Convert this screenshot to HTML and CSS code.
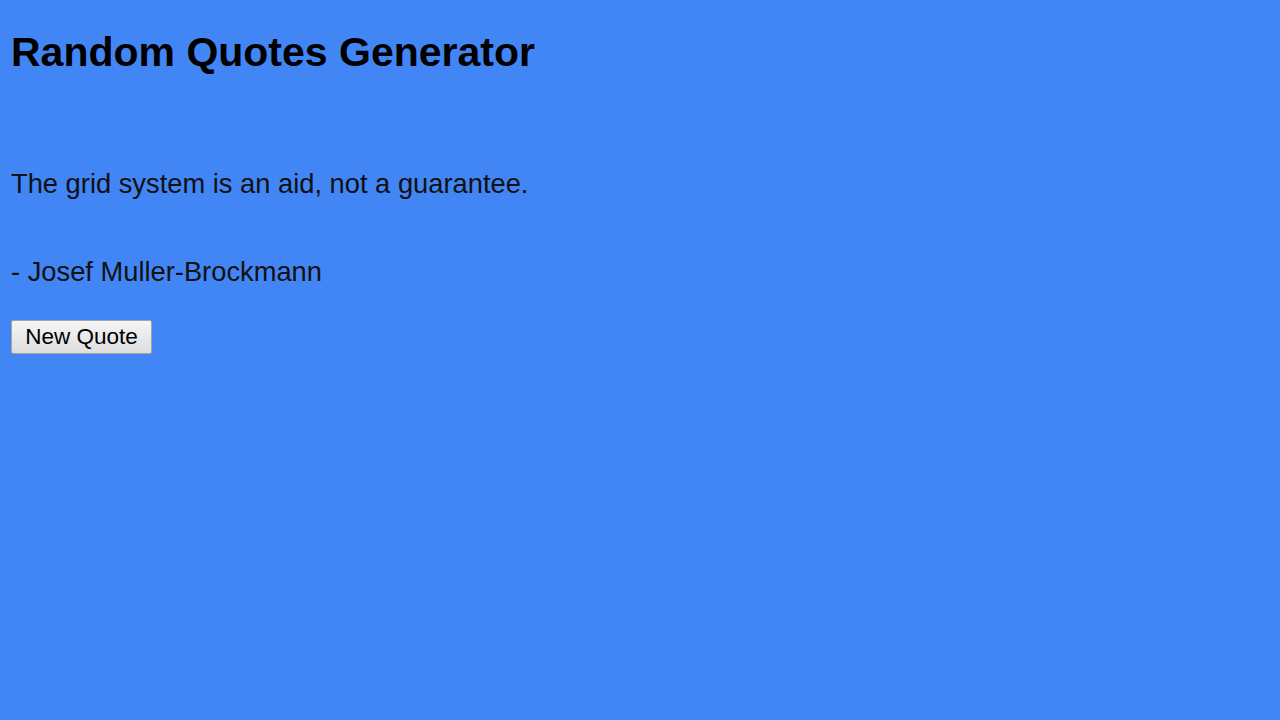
FILE: index.html
```html
<!DOCTYPE html>
<html>
<head>
<meta charset="utf-8">
<title>Random Quotes Generator</title>
<link rel="stylesheet" href="styles.css">
</head>
<body>
<h1 class="title">Random Quotes Generator</h1>
<div class="quote-box">
  <p class="quote">The grid system is an aid, not a guarantee.</p>
  <p class="author">- Josef Muller-Brockmann</p>
  <button class="new-quote">New Quote</button>
</div>
</body>
</html>
```
FILE: styles.css
```css
html, body {
  background: #4285f4;
}
body {
  margin: 10px 11px;
  font-family: "Liberation Sans", Arial, sans-serif;
  color: #000;
}
.title {
  font-size: 41px;
  line-height: 46px;
  font-weight: bold;
  margin: 19px 0 0 0;
}
.quote-box {
  display: flex;
  flex-direction: column;
  align-items: flex-start;
}
.quote {
  font-size: 27.3px;
  line-height: 32px;
  margin: 93px 0 0 0;
  color: #111;
}
.author {
  font-size: 27.3px;
  line-height: 32px;
  margin: 56px 0 0 0;
  color: #111;
}
.new-quote {
  margin-top: 32px;
  height: 34px;
  width: 141px;
  padding: 0;
  font-family: "Liberation Sans", Arial, sans-serif;
  font-size: 22.5px;
  color: #000;
  background: linear-gradient(#f6f6f6, #dddddd);
  border: 1px solid #a3a3a3;
  border-radius: 2px;
}
```
